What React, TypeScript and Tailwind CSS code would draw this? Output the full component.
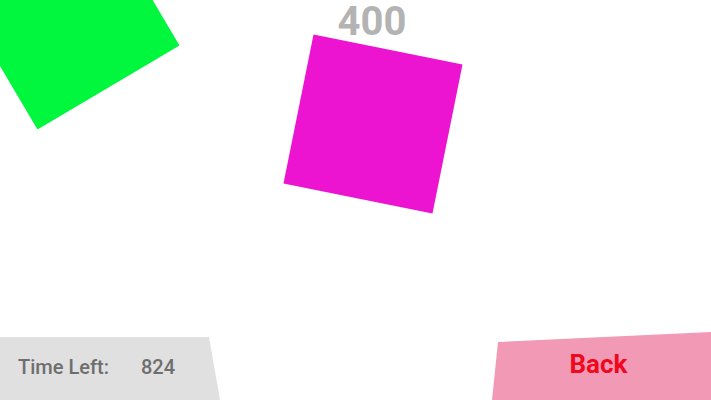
import React from 'react';

const font = { fontFamily: 'Roboto, "Liberation Sans", sans-serif' };

export default function App() {
  return (
    <div
      className="relative w-[711px] h-[400px] overflow-hidden bg-white"
      style={font}
    >
      {/* tiles on the game board */}
      <div className="absolute left-[-16.5px] top-[-66.5px] w-[165px] h-[165px] bg-[#00f73e] rotate-[-30.6deg]" />
      <div className="absolute left-[296.5px] top-[48px] w-[152px] h-[152px] bg-[#ec14d0] rotate-[11.4deg]" />

      {/* score */}
      <div className="absolute top-0 left-0 right-0 flex justify-center">
        <span className="ml-[33px] text-[40px] leading-[44px] font-bold text-[#b3b3b3]">400</span>
      </div>

      {/* bottom bar */}
      <div className="absolute bottom-0 left-0 right-0 flex items-end justify-between">
        <div className="w-[220px] h-[63px] bg-[#e0e0e0] [clip-path:polygon(0_0,209px_0,100%_100%,0_100%)] flex items-center pl-[18px] pb-[4px] text-[20px] font-medium text-[#6e6e6e]">
          <span>Time Left:</span>
          <span className="ml-[32px]">824</span>
        </div>
        <div className="w-[219px] h-[68px] bg-[#f29ab5] [clip-path:polygon(6px_10px,100%_0,100%_100%,0_100%)] flex items-center justify-center pr-[6px] pb-[4px] text-[26px] font-bold text-[#f0081c]">
          Back
        </div>
      </div>
    </div>
  );
}
